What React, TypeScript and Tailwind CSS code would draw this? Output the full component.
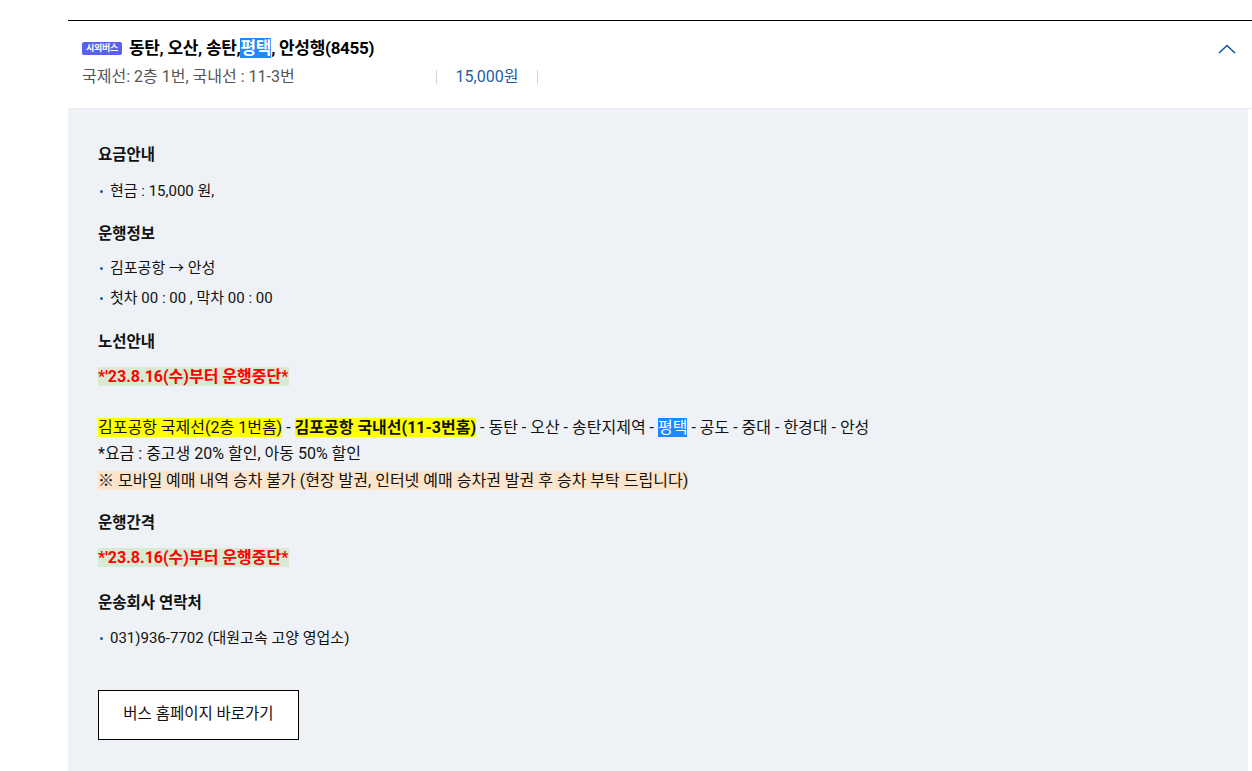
import React from "react";

const font = { fontFamily: 'Roboto, "Noto Sans CJK KR", sans-serif' };

function Bullet({ children }: { children: React.ReactNode }) {
  return (
    <li className="flex items-center h-[30px] text-[15px] text-[#111]">
      <span className="w-[3px] h-[3px] rounded-full bg-[#1a5aa6] mr-[7px] ml-[2px]" />
      <span>{children}</span>
    </li>
  );
}

function Heading({ children }: { children: React.ReactNode }) {
  return <h3 className="text-[15.5px] font-bold text-[#111] leading-[22px]">{children}</h3>;
}

export default function App() {
  return (
    <div className="min-h-[771px] bg-white pt-[20px] pl-[68px]" style={font}>
      <div className="border-t border-black w-[1184px]">
        <div className="h-[88px] pl-[14px] pr-[16px] flex justify-between border-b border-[#e8eaee]">
          <div className="flex flex-col">
            <div className="flex items-center mt-[16px] h-[22px]">
              <span className="bg-[#5a5ff0] text-white text-[9px] font-bold leading-[13px] h-[13px] px-[4px] rounded-[2px] mr-[7px] tracking-[-0.3px]">
                시외버스
              </span>
              <span className="text-[17px] font-bold text-black tracking-[-0.3px] leading-[22px]">
                동탄, 오산, 송탄,<span className="bg-[#1e88ff] text-white">평택</span>, 안성행(8455)
              </span>
            </div>
            <div className="flex items-center mt-[8px] h-[20px] text-[16px]">
              <span className="w-[354px] text-[#555]">국제선: 2층 1번, 국내선 : 11-3번</span>
              <span className="h-[14px] border-l border-[#d4d4d4]" />
              <span className="w-[100px] text-center text-[#1a5fa8]">15,000원</span>
              <span className="h-[14px] border-l border-[#d4d4d4]" />
            </div>
          </div>
          <div className="pt-[23px]">
            <svg width="18" height="10" viewBox="0 0 18 10" fill="none">
              <path d="M1 9 L9 1.5 L17 9" stroke="#0b5aa8" strokeWidth="1.6" />
            </svg>
          </div>
        </div>
        <div className="bg-[#eef1f6] w-[1180px] h-[662px] pl-[30px] pt-[35px]">
          <Heading>요금안내</Heading>
          <ul className="mt-[10px]">
            <Bullet>현금 : 15,000 원,</Bullet>
          </ul>
          <div className="mt-[17px]">
            <Heading>운행정보</Heading>
          </div>
          <ul className="mt-[8px]">
            <Bullet>김포공항 → 안성</Bullet>
            <Bullet>첫차 00 : 00 , 막차 00 : 00</Bullet>
          </ul>
          <div className="mt-[18px]">
            <Heading>노선안내</Heading>
          </div>
          <div className="mt-[11px] text-[16px] leading-[26.5px] text-[#111]">
            <div>
              <span className="bg-[#d9ead3] text-[#ff0000] font-bold">*'23.8.16(수)부터 운행중단*</span>
            </div>
            <div className="h-[24px]" />
            <div>
              <span className="bg-[#ffff00]">김포공항 국제선(2층 1번홈)</span> -{" "}
              <span className="bg-[#ffff00] font-bold">김포공항 국내선(11-3번홈)</span> - 동탄 - 오산 - 송탄지제역 -{" "}
              <span className="bg-[#1e88ff] text-white">평택</span> - 공도 - 중대 - 한경대 - 안성
            </div>
            <div>*요금 : 중고생 20% 할인, 아동 50% 할인</div>
            <div>
              <span className="bg-[#fce5cd]">※ 모바일 예매 내역 승차 불가 (현장 발권, 인터넷 예매 승차권 발권 후 승차 부탁 드립니다)</span>
            </div>
          </div>
          <div className="mt-[18px]">
            <Heading>운행간격</Heading>
          </div>
          <div className="mt-[11px] text-[16px] leading-[26px]">
            <span className="bg-[#d9ead3] text-[#ff0000] font-bold">*'23.8.16(수)부터 운행중단*</span>
          </div>
          <div className="mt-[21px]">
            <Heading>운송회사 연락처</Heading>
          </div>
          <ul className="mt-[9px]">
            <Bullet>031)936-7702 (대원고속 고양 영업소)</Bullet>
          </ul>
          <button className="mt-[37px] w-[201px] h-[50px] bg-white border border-black text-[15.5px] text-[#111]" style={font}>
            버스 홈페이지 바로가기
          </button>
        </div>
      </div>
    </div>
  );
}
